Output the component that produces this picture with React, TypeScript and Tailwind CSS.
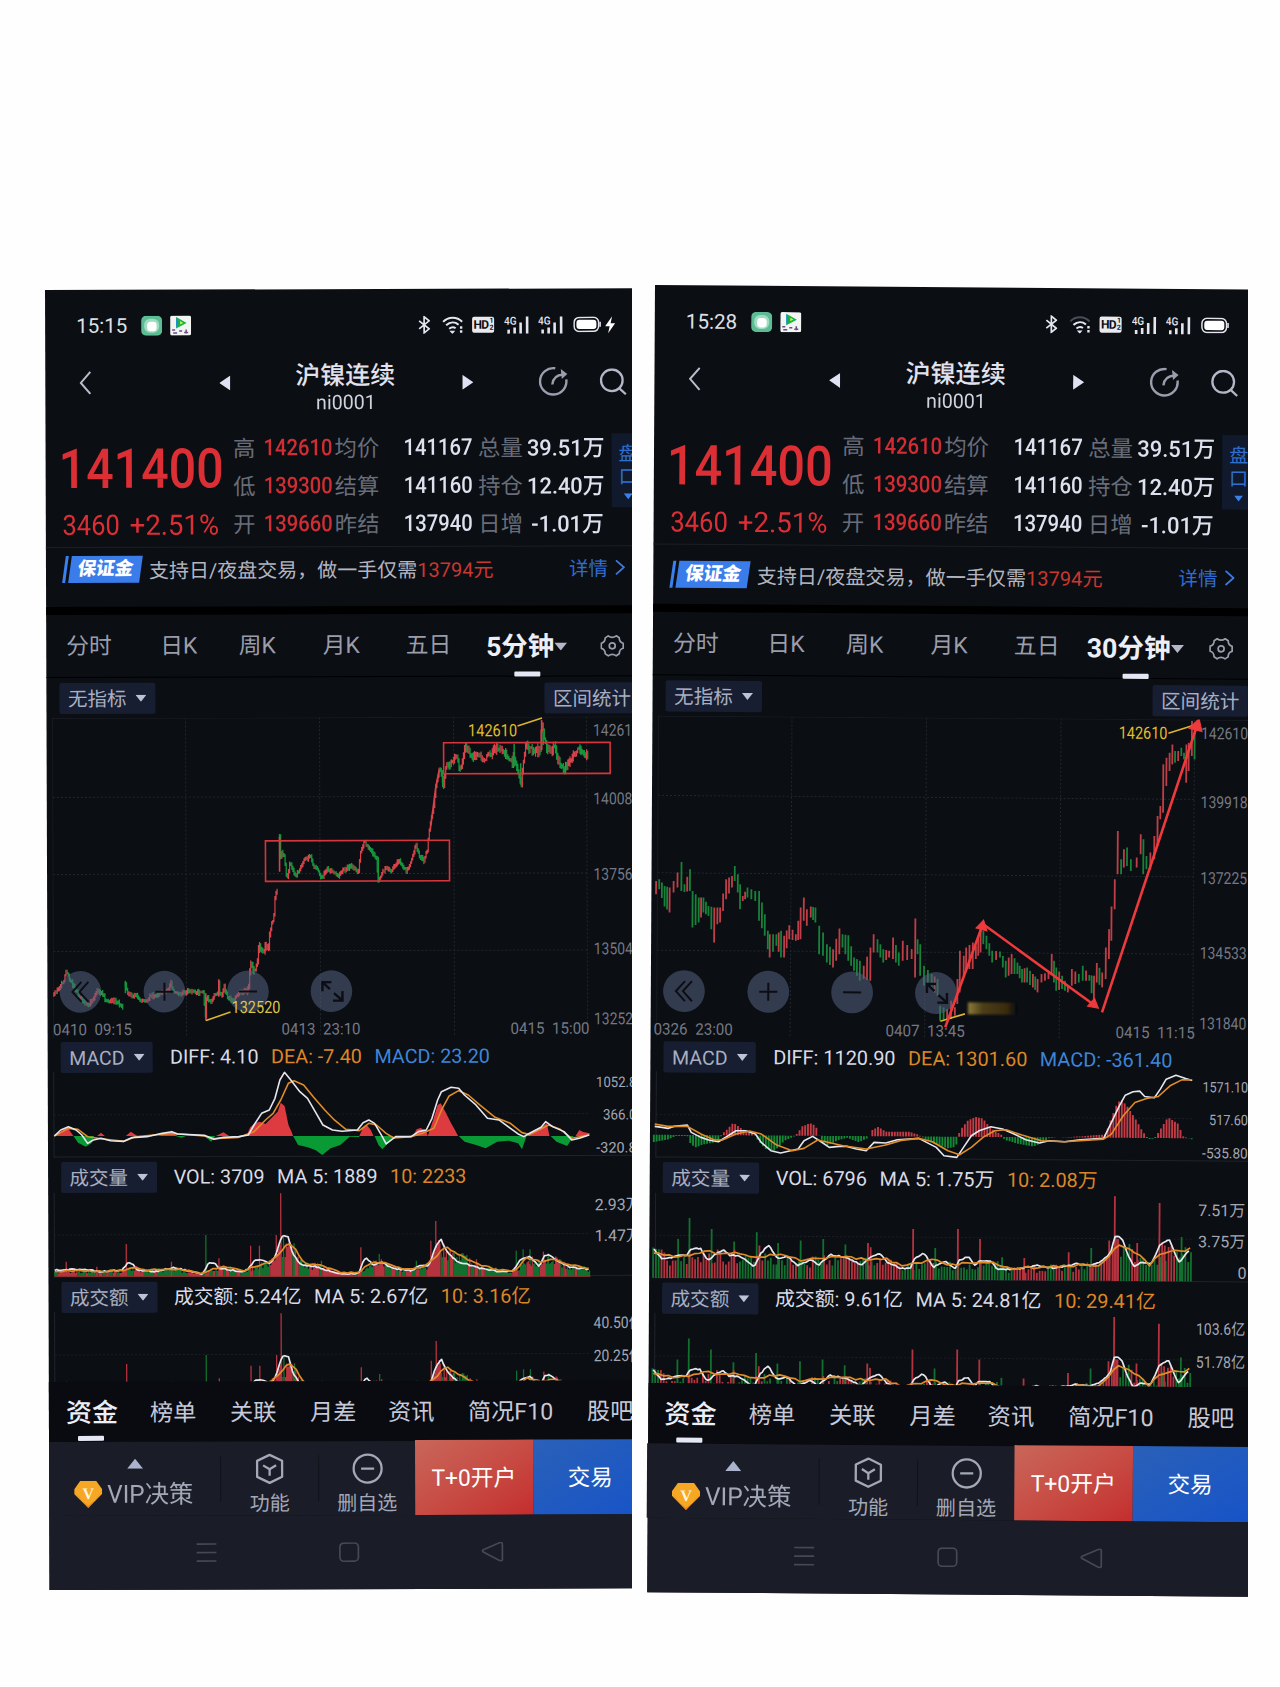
import type { ReactNode } from 'react';

type Pt = [number, number];
type Range = [number, number, number];
type Spike = [number, number, 'r' | 'g'];

const RED = '#d8434b';
const GREEN = '#12963c';
const UP = '#b5333f';
const DOWN = '#12702f';

const noise = (i: number) => {
  const v = Math.sin(i * 127.1 + 11.7) * 43758.5453;
  return v - Math.floor(v);
};

const at = (pts: Pt[], x: number) => {
  for (let i = 1; i < pts.length; i++) {
    if (x <= pts[i][0]) {
      const [x0, y0] = pts[i - 1];
      const [x1, y1] = pts[i];
      return y0 + ((y1 - y0) * (x - x0)) / (x1 - x0 || 1);
    }
  }
  return pts[pts.length - 1][1];
};

// resamples a moving average with a little jitter
const wobble = (pts: Pt[], step: number, amount: number) => {
  const out: Pt[] = [];
  for (let x = pts[0][0]; x <= pts[pts.length - 1][0]; x += step) {
    out.push([x, at(pts, x) + (noise(x + pts.length) - 0.5) * amount]);
  }
  return out;
};

const line = (pts: Pt[]) => 'M' + pts.map((p) => p.join(' ')).join('L');

const parse = (s: string): Pt[] => s.split(' ').map((p) => p.split(',').map(Number) as Pt);

// ---- 5 minute data ----

const price5 = [
  '35,525 50,500 60,488 67,455 75,475 90,505 110,545 125,555 140,535 148,512 160,518 172,545 185,540 200,545 217,560',
  '222,490 228,520 240,530 250,525 262,540 275,545 290,525 300,530 310,520 322,518 335,510 340,485 346,515 360,525 385,512 425,520 432,598 434,530 445,548 455,520 464,522 466,480 468,520 475,525 480,500 488,530 505,545 515,525 520,515 543,512 545,470 550,430 556,455 565,440 572,380 580,400 590,375 595,390 600,330 610,295 615,215 622,210',
  '626,52 627,155 630,90 638,110 645,180 652,130 668,170 690,120 708,110 715,140 725,145 735,175 750,148 765,155 780,165 795,150 812,138 832,155 838,90 848,66 858,80 870,100 878,115 884,183 895,155 905,140 915,155 938,120 958,155 970,125 982,75 990,105 1003,122 1012,90 1018,20 1022,0 1030,-50 1035,-100 1045,-155 1055,-105 1062,-160 1080,-180 1090,-185 1098,-150 1105,-185 1112,-220 1120,-205 1135,-190 1145,-200 1158,-180 1175,-195 1195,-215 1210,-205 1225,-190 1235,-175 1240,-190 1245,-160 1258,-110 1265,-180 1272,-230 1280,-210 1308,-210 1312,-300 1318,-250 1325,-215 1335,-210 1345,-220 1355,-180 1370,-150 1385,-180 1400,-200 1407,-220 1418,-210 1433,-190',
].map(parse);

const macdRed5 = [
  '38,288 55,275 72,262 88,288', '150,288 160,278 170,288', '225,288 238,275 255,288', '310,288 345,275 360,288',
  '460,288 480,277 495,288',
  '540,288 550,262 562,250 575,245 590,252 605,235 622,215 630,188 640,198 650,255 658,275 662,288',
  '835,288 845,262 855,255 865,270 872,288', '975,288 985,268 995,264 1010,272 1014,288',
  '1014,288 1028,240 1040,195 1048,190 1060,215 1075,250 1085,270 1093,288',
  '1272,288 1290,272 1315,258 1325,250 1332,288', '1400,288 1410,270 1420,276 1437,280 1437,288',
];
const macdGreen5 = [
  '88,288 100,308 120,320 135,310 142,288', '430,288 448,305 458,288',
  '662,288 675,315 700,322 720,330 738,345 760,325 785,315 810,290 835,291 835,288', '875,288 885,315 895,328 910,310 925,288',
  '1095,288 1110,305 1140,315 1165,325 1195,305 1225,302 1250,310 1260,328 1272,288', '1335,288 1350,305 1378,318 1395,288',
  '355,288 370,293 382,288',
];
const diff5 = parse('38,288 55,270 75,260 95,270 110,285 125,310 140,300 160,295 185,302 220,304 240,293 280,290 320,280 345,275 360,282 430,286 455,298 480,292 520,290 545,285 560,255 580,220 600,210 615,175 628,120 640,97 655,118 680,155 700,175 720,215 740,255 765,270 790,274 830,270 845,248 860,240 875,250 895,290 905,312 930,290 970,290 990,275 1010,270 1025,235 1040,180 1050,155 1075,142 1095,145 1110,165 1140,195 1170,235 1200,240 1230,265 1250,282 1265,290 1280,280 1310,262 1322,245 1340,260 1370,275 1390,300 1410,295 1435,285');
const dea5 = parse('38,288 75,265 100,268 125,290 160,296 220,304 250,290 345,280 430,288 455,296 520,292 560,275 590,240 610,220 630,180 650,130 665,122 690,135 715,170 745,210 770,240 800,268 835,272 860,250 880,255 905,280 925,294 970,290 1000,280 1030,265 1050,210 1070,168 1095,152 1120,165 1150,195 1190,232 1230,250 1260,278 1280,284 1330,255 1360,268 1390,295 1435,285');
const volA5 = parse('38,690 75,688 120,690 160,695 215,690 228,670 240,670 255,690 300,695 345,683 380,690 425,702 440,668 455,668 465,685 485,688 530,695 545,685 560,660 580,658 600,670 615,650 628,600 635,585 648,592 660,640 680,675 720,680 760,695 800,702 832,700 845,660 853,655 870,675 890,665 905,675 920,685 970,692 995,675 1015,680 1030,630 1040,605 1048,600 1065,640 1090,665 1150,685 1200,695 1235,692 1255,660 1280,650 1305,680 1318,645 1330,645 1355,665 1380,680 1435,688');
const volB5 = parse('38,694 100,692 160,694 215,692 250,682 270,690 345,686 425,700 455,685 475,680 530,692 560,680 600,665 625,640 648,608 665,625 690,672 730,675 790,698 832,698 860,670 900,665 950,690 1000,682 1030,655 1060,618 1080,635 1110,655 1150,675 1200,690 1240,692 1270,655 1310,665 1340,655 1370,672 1435,686');
const spikes5: Spike[] = [
  [68, 665, 'r'], [148, 680, 'r'], [225, 612, 'r'], [343, 665, 'r'], [433, 585, 'g'], [467, 655, 'r'], [550, 617, 'r'],
  [573, 617, 'r'], [617, 585, 'r'], [629, 460, 'r'], [636, 590, 'g'], [665, 650, 'g'], [735, 662, 'g'], [838, 622, 'r'],
  [886, 642, 'g'], [983, 662, 'g'], [1021, 602, 'r'], [1034, 543, 'r'], [1042, 600, 'r'], [1115, 645, 'g'],
  [1140, 658, 'r'], [1244, 632, 'g'], [1262, 628, 'g'], [1280, 628, 'g'], [1315, 635, 'r'], [1328, 640, 'g'],
];

// ---- 30 minute data ----

const price30: Range[] = '30,185,225 38,180,210 52,200,262 65,205,280 75,185,220 85,160,205 95,128,215 103,195,218 117,150,215 124,215,325 140,235,310 152,235,280 165,260,290 180,265,370 188,265,315 195,265,310 210,180,240 225,170,205 232,140,185 240,165,220 246,195,270 253,230,245 265,205,235 285,215,245 295,215,305 310,285,350 318,335,390 323,345,415 340,345,380 352,335,415 360,350,415 373,318,360 390,345,365 402,265,360 410,235,305 418,270,320 428,262,295 440,265,310 450,320,405 460,340,410 470,375,430 486,390,445 502,328,405 510,345,385 525,348,425 540,415,455 555,425,485 565,440,480 582,385,485 590,345,400 600,360,400 615,390,430 630,395,415 640,355,420 655,400,440 665,365,425 688,390,420 697,298,475 703,360,405 710,375,470 720,440,500 740,465,510 755,480,530 762,560,605 780,570,600 790,545,600 800,565,590 812,395,520 822,410,470 828,385,450 845,370,450 853,380,420 865,330,400 872,335,375 880,350,390 895,395,430 915,397,415 930,425,475 945,405,465 960,430,465 972,450,490 985,445,490 1000,465,505 1012,480,520 1022,465,490 1040,460,480 1048,405,465 1060,445,515 1075,470,510 1090,500,520 1100,450,500 1118,465,490 1128,440,485 1145,468,485 1157,470,560 1164,432,490 1178,460,505 1187,385,480 1195,330,420 1201,262,365 1209,180,270 1216,35,165 1225,120,165 1232,90,145 1240,85,140 1250,120,155 1265,115,145 1275,45,105 1282,60,165 1290,110,150 1300,100,150 1310,50,120 1318,-10,80 1325,-40,0 1332,-165,-20 1340,-185,-100 1348,-200,-145 1355,-225,-165 1362,-205,-170 1370,-205,-175 1378,-215,-190 1385,-200,-180 1391,-225,-110 1397,-230,-145 1405,-295,-190 1412,-290,-180'
  .split(' ')
  .map((p) => p.split(',').map(Number) as Range);
const hist30 = parse('24,-22 60,-14 80,-3 110,-3 118,-25 130,-38 150,-28 190,-20 200,5 210,15 228,38 240,28 260,12 280,5 285,-5 310,-40 335,-45 360,-15 385,-2 395,10 405,28 425,38 440,30 450,-5 470,-28 500,-12 520,-5 550,-18 578,-4 580,15 600,28 620,14 680,14 705,5 715,-3 740,-20 780,-35 800,-30 806,-5 810,18 830,48 850,60 870,55 890,25 920,5 925,-8 960,-20 1000,-28 1030,-12 1040,-2 1115,3 1185,10 1200,60 1215,105 1225,115 1240,95 1260,60 1280,20 1295,-3 1310,-2 1320,15 1345,62 1370,45 1385,5 1405,-3');
const diff30 = parse('26,262 45,265 60,268 75,262 110,258 120,280 145,295 165,303 190,308 215,290 235,275 260,275 285,285 300,310 325,335 350,342 395,330 410,305 432,292 450,305 475,325 500,322 520,322 545,330 570,335 590,310 620,312 650,302 680,300 705,298 725,310 750,325 770,350 803,355 820,325 840,290 860,275 890,263 920,270 950,285 980,302 1015,312 1040,305 1080,308 1120,302 1180,298 1200,250 1220,200 1235,168 1255,158 1272,156 1285,172 1310,176 1325,150 1340,120 1365,108 1390,118 1407,124');
const dea30 = parse('26,255 60,262 110,262 145,285 180,303 200,303 235,285 270,276 300,285 340,318 380,335 410,328 445,303 480,312 510,320 570,330 620,318 660,304 705,298 740,308 780,335 810,347 840,325 870,295 900,275 930,272 970,288 1020,305 1080,308 1180,300 1200,285 1230,230 1260,190 1290,178 1320,172 1350,140 1380,122 1405,122');
const volA30 = parse('26,630 45,658 75,655 95,648 110,652 120,632 145,628 165,665 180,650 205,632 220,650 245,650 265,665 283,685 300,645 320,618 345,660 370,652 395,680 430,662 450,678 480,648 520,655 560,678 580,655 605,643 625,670 660,688 685,690 695,660 720,643 745,685 775,665 800,690 810,665 835,652 850,680 865,665 890,665 910,692 960,690 1010,680 1060,688 1110,675 1150,680 1180,665 1200,640 1212,588 1230,600 1245,650 1260,685 1280,670 1305,675 1325,620 1350,600 1375,672 1390,650 1405,628');
const volB30 = parse('26,640 80,655 120,648 170,638 200,645 240,640 285,655 330,648 370,650 410,665 460,660 500,655 560,660 620,660 660,680 700,675 740,665 800,678 850,670 900,672 940,688 1000,685 1100,680 1170,678 1195,650 1220,622 1245,628 1270,648 1300,678 1330,640 1360,635 1390,637 1405,630');
const spikes30: Spike[] = [
  [88, 600, 'g'], [117, 537, 'g'], [174, 570, 'g'], [232, 608, 'g'], [290, 580, 'g'], [297, 620, 'r'], [345, 612, 'g'],
  [403, 605, 'g'], [461, 600, 'g'], [518, 617, 'g'], [576, 612, 'r'], [583, 625, 'r'], [692, 570, 'r'], [749, 627, 'g'],
  [807, 570, 'r'], [864, 600, 'r'], [921, 655, 'g'], [978, 657, 'r'], [1092, 640, 'r'], [1150, 627, 'g'], [1196, 605, 'r'],
  [1210, 472, 'r'], [1217, 600, 'r'], [1268, 612, 'r'], [1325, 492, 'r'], [1332, 610, 'r'], [1339, 620, 'r'], [1382, 594, 'g'],
];

const quotes5 = {
  time: '15:15',
  charging: true,
  period: '5分钟',
  bannerPad: 'pt-[7px]',
  axis: ['14261', '14008', '13756', '13504', '13252'],
  dates: ['0410 09:15', '0413 23:10', '0415 15:00'],
  macd: ['DIFF: 4.10', 'DEA: -7.40', 'MACD: 23.20'],
  vol: ['VOL: 3709', 'MA 5: 1889', '10: 2233'],
  amount: ['成交额: 5.24亿', 'MA 5: 2.67亿', '10: 3.16亿'],
  macdAxis: ['1052.8', '366.0', '-320.8'],
  volAxis: ['2.93万', '1.47万'],
  amountAxis: ['40.50亿', '20.25亿'],
};
const quotes30: typeof quotes5 = {
  time: '15:28',
  charging: false,
  period: '30分钟',
  bannerPad: 'pt-[15px]',
  axis: ['142610', '139918', '137225', '134533', '131840'],
  dates: ['0326 23:00', '0407 13:45', '0415 11:15'],
  macd: ['DIFF: 1120.90', 'DEA: 1301.60', 'MACD: -361.40'],
  vol: ['VOL: 6796', 'MA 5: 1.75万', '10: 2.08万'],
  amount: ['成交额: 9.61亿', 'MA 5: 24.81亿', '10: 29.41亿'],
  macdAxis: ['1571.10', '517.60', '-535.80'],
  volAxis: ['7.51万', '3.75万', '0'],
  amountAxis: ['103.6亿', '51.78亿'],
};

const stats = [
  ['高', '142610', '均价', '141167', '总量', '39.51万'],
  ['低', '139300', '结算', '141160', '持仓', '12.40万'],
  ['开', '139660', '昨结', '137940', '日增', '-1.01万'],
];

function Stroke({ pts, color, width = 1.6 }: { pts: Pt[]; color: string; width?: number }) {
  return <path d={line(pts)} fill="none" stroke={color} strokeWidth={width} strokeLinejoin="round" vectorEffect="non-scaling-stroke" />;
}

function Bars({ d, color, width }: { d: string; color: string; width: number }) {
  return <path d={d} fill="none" stroke={color} strokeWidth={width} vectorEffect="non-scaling-stroke" />;
}

function Candles5() {
  let up = '';
  let down = '';
  price5.forEach((run) => {
    let prev = run[0][1];
    for (let x = run[0][0]; x <= run[run.length - 1][0]; x += 2.9) {
      const busy = x > 1050 || (x > 540 && x < 600);
      const y = at(run, x) + (noise(x) - 0.5) * (busy ? 16 : 9);
      const pad = 3 + noise(x + 3) * (busy ? 12 : 5);
      const seg = `M${x} ${Math.min(prev, y) - pad}V${Math.max(prev, y) + pad}`;
      if (y - prev < (noise(x + 9) - 0.5) * 10) up += seg;
      else down += seg;
      prev = y;
    }
  });
  return (
    <>
      <Bars d={down} color={GREEN} width={1.3} />
      <Bars d={up} color={RED} width={1.2} />
      <path d="M432 520V602M626 50V155M1312 -300V-210M1020 30L1035 -100L1044 -150M466 478V530" fill="none" stroke={RED} strokeWidth={1.6} vectorEffect="non-scaling-stroke" />
      <path d="M1240 -228V-160M1257 -170V-106M884 110V188M222 486V520M1053 -150V-98M1316 -265V-225" fill="none" stroke={GREEN} strokeWidth={1.5} vectorEffect="non-scaling-stroke" />
    </>
  );
}

function Candles30() {
  let up = '';
  let down = '';
  const tops = price30.map(([x, t]) => [x, t] as Pt);
  const bottoms = price30.map(([x, , b]) => [x, b] as Pt);
  const xs = price30.map((p) => p[0]);
  price30.forEach(([x], i) => {
    const next = xs[i + 1];
    if (next && next - x > 11 && x < 1200) xs.push((x + next) / 2);
  });
  xs.sort((a, b) => a - b).forEach((x) => {
    const t = at(tops, x);
    const b = at(bottoms, x);
    const slope = at(tops, x + 6) + at(bottoms, x + 6) - at(tops, x - 6) - at(bottoms, x - 6);
    const tall = [65, 180, 323, 697, 1048, 1157].includes(x);
    if (tall || slope < (noise(x) - 0.5) * 70) up += `M${x} ${t}V${b}`;
    else down += `M${x} ${t}V${b}`;
  });
  return (
    <>
      <Bars d={up} color="#bf3f48" width={1.8} />
      <Bars d={down} color="#178239" width={1.8} />
    </>
  );
}

function Volume({ wide }: { wide: boolean }) {
  const [ma5, ma10, spikes] = wide ? [volA30, volB30, spikes30] : [volA5, volB5, spikes5];
  const step = wide ? 7.2 : 3.4;
  const base = (x: number) => (wide ? 717 + x * 0.0075 : 709);
  let up = '';
  let down = '';
  for (let x = wide ? 24 : 38; x < (wide ? 1407 : 1438); x += step) {
    const h = base(x) - at(ma10, x);
    const y = base(x) - h * (0.55 + noise(x) * 0.65);
    const surge = wide ? x > 1175 && x < 1220 : (x > 600 && x < 632) || (x > 1015 && x < 1045);
    const seg = `M${x} ${base(x)}V${surge ? Math.min(y, at(ma5, x) + 8) : y}`;
    if (surge || noise(Math.floor(x / (wide ? 22 : 9)) + 5) > 0.5) up += seg;
    else down += seg;
  }
  spikes.forEach(([x, y, c]) => {
    if (c === 'r') up += `M${x} ${base(x)}V${y}`;
    else down += `M${x} ${base(x)}V${y}`;
  });
  return (
    <>
      <Bars d={down} color={DOWN} width={wide ? 1.8 : 1.3} />
      <Bars d={up} color={UP} width={wide ? 1.8 : 1.3} />
      {!wide && <path d="M38 709.500H1438" stroke="#a83a35" strokeWidth="2" />}
      <Stroke pts={wobble(ma5, 5, 4)} color="#e6e6ee" width={1.7} />
      <Stroke pts={wobble(ma10, wide ? 13 : 9, wide ? 9 : 5)} color="#e08c28" width={1.7} />
    </>
  );
}

function Macd({ wide }: { wide: boolean }) {
  if (!wide) {
    return (
      <>
        {macdRed5.map((p) => <polygon key={p} points={p} fill="#de3b41" />)}
        {macdGreen5.map((p) => <polygon key={p} points={p} fill="#0a9a35" />)}
        <Stroke pts={dea5} color="#e08c28" />
        <Stroke pts={diff5} color="#e6e6ee" />
      </>
    );
  }
  let up = '';
  let down = '';
  for (let x = 24; x < 1408; x += 7.2) {
    const zero = 287 + x * 0.0075;
    const h = at(hist30, x);
    if (h > 0) up += `M${x} ${zero}V${zero - h}`;
    else down += `M${x} ${zero}V${zero - h}`;
  }
  return (
    <>
      <Bars d={up} color="#c43b45" width={1.9} />
      <Bars d={down} color="#128a35" width={1.9} />
      <Stroke pts={diff30} color="#e6e6ee" />
      <Stroke pts={dea30} color="#e08c28" />
    </>
  );
}

function Label({ x, y, w, size = 16, fill = '#757984', end, gap, children }: { x: number; y: number; w?: number; size?: number; fill?: string; end?: boolean; gap?: number; children: string }) {
  return (
    <text x={x} y={y + size * 0.36} fontSize={size} fill={fill} textLength={w} lengthAdjust="spacingAndGlyphs" textAnchor={end ? 'end' : 'start'} wordSpacing={gap}>
      {children}
    </text>
  );
}

function PriceChart({ wide, q }: { wide: boolean; q: typeof quotes5 }) {
  return (
    <svg className="block h-[320px] w-[620px] shrink-0" viewBox="0 428 620 320">
      <g stroke="#23272e" strokeWidth="1" strokeDasharray="2 2">
        {[139, 273, 407, 540].map((x) => <path key={x} d={`M${x} 428V747`} />)}
        {[507.5, 584.5, 661.5].map((y) => <path key={y} d={`M6 ${y}H540`} />)}
      </g>
      <path d="M6 428V748M6 428.500H620" stroke="#171a20" fill="none" />
      {q.axis.map((t, i) => (
        <Label key={t} x={546.500} y={[441.5, 510, 585.5, 660, 730][i]} w={t.length * 7.8} size={16.500}>{t}</Label>
      ))}
      {q.dates.map((t, i) => <Label key={t} x={[wide ? 3 : 5.500, 234, 463][i]} y={739.5} w={79} gap={4}>{t}</Label>)}
      <g transform={wide ? 'matrix(.3875 -.003 0 .331 -7 531.5)' : 'matrix(.3827 .0011 0 .3333 -7 530)'}>
        {wide ? <Candles30 /> : <Candles5 />}
      </g>
      <g>
        {[33, 117, 200.5, 284].map((x) => <circle key={x} cx={x} cy="702" r="20.800" fill="#566080" fillOpacity="0.550" />)}
        <g stroke="#0c0e14" strokeWidth="2" fill="none">
          <path d="M34 692L25 702L34 712M41 692L32 702L41 712M108 702H126M117 693V711M191.500 702H209.500" />
          <path d="M275 702V693H284M275.500 693.500L282.500 700M285.500 711.500H295V702M286.500 704L294.500 711" strokeWidth="2.400" />
        </g>
      </g>
      {wide ? (
        <>
          <path d="M514 442L540 433.500M288.500 730L313 722.500" stroke="#dcb52e" strokeWidth="1.600" />
          <Label x={464.500} y={441.500} w={48.500} size={17} fill="#e2bd2c">142610</Label>
          <defs>
            <linearGradient id="smear">
              <stop offset="0" stopColor="#8f7d38" />
              <stop offset="0.300" stopColor="#4d3f1a" />
              <stop offset="0.800" stopColor="#3a2b0e" />
              <stop offset="1" stopColor="#0c0e13" />
            </linearGradient>
            <filter id="soft"><feGaussianBlur stdDeviation="0.900" /></filter>
          </defs>
          <rect x="316" y="711" width="48" height="12" fill="url(#smear)" filter="url(#soft)" />
          <g stroke="#ee3a3c" strokeWidth="2.600" fill="#ee3a3c">
            <path d="M293.500 736L330 634M330.500 633L442 713M449.500 720L541.500 437" fill="none" />
            <path strokeWidth="1" d="M331 629L323.500 637L334.500 640ZM446 716L435 714L442 706ZM544.500 427L534.500 437L547.500 440Z" />
          </g>
        </>
      ) : (
        <>
          <path d="M471 437.500L495.500 429.500M158.500 731L183 722.500" stroke="#dcb52e" strokeWidth="1.600" />
          <Label x={421.500} y={441.500} w={49} size={17} fill="#e2bd2c">142610</Label>
          <Label x={184} y={717.500} w={49} size={17} fill="#dcc44a">132520</Label>
          <g fill="none" stroke="#d6363b" strokeWidth="1.600">
            <rect x="397" y="454" width="166.500" height="31" />
            <rect x="218.500" y="551.500" width="184" height="40.500" />
          </g>
        </>
      )}
    </svg>
  );
}

const dataMatrix = (wide: boolean, dy: number) =>
  wide ? `matrix(.3875 -.0029 0 .331 -5.4 ${750.1 + dy})` : `matrix(.3827 .0011 0 .3333 -8.2 ${750 + dy})`;

function Tag({ children, caret = true }: { children: string; caret?: boolean }) {
  return (
    <div className="flex h-[31px] items-center gap-[9px] rounded-[2px] bg-[#171e32] px-[8.500px] text-[19.5px] whitespace-nowrap text-[#a9afc0]">
      <span className="pt-[3px]">{children}</span>
      {caret && <svg className="h-[7px] w-[11px]" viewBox="0 0 11 7"><path d="M0 0H11L5.500 7Z" fill="#bcc3d6" /></svg>}
    </div>
  );
}

function Legend({ name, values, last }: { name: string; values: string[]; last?: string }) {
  const colors = last ? ['text-[#d9dbe6]', 'text-[#dc8626]', last] : ['text-[#d9dbe6]', 'text-[#d9dbe6]', 'text-[#dc8626]'];
  return (
    <div className="flex h-[38px] items-center pl-[13px]">
      <Tag>{name}</Tag>
      <div className="ml-[17px] flex gap-[12.500px] pt-[2px] text-[19.800px] whitespace-nowrap">
        {values.map((v, i) => <span key={v} className={colors[i]}>{v}</span>)}
      </div>
    </div>
  );
}

function Signal() {
  return (
    <svg className="h-[19px] w-[25px]" viewBox="0 0 25 19">
      <text x="0" y="9" fontSize="11" fontWeight="500" fill="#e4e5ee" textLength="12.500" lengthAdjust="spacingAndGlyphs">4G</text>
      <path d="M4.500 14V18M10.500 12V18M16.500 7V18M23 1V18" stroke="#e4e5ee" strokeWidth="2.600" />
    </svg>
  );
}

function StatusBar({ time, charging }: { time: string; charging: boolean }) {
  return (
    <div className="flex h-[72px] items-center pl-[31px]">
      <span className="w-[65px] pt-px text-[20.5px] text-[#dfe0e6]">{time}</span>
      <svg className="h-[20px] w-[21px]" viewBox="0 0 21 20">
        <rect width="21" height="20" rx="5" fill="#5cbd95" />
        <rect x="3" y="3" width="15" height="14" rx="6" fill="#9fdcc2" />
        <rect x="6" y="6" width="9.500" height="9.500" rx="3.500" fill="#fff" />
      </svg>
      <svg className="ml-[8px] h-[20px] w-[21px]" viewBox="0 0 21 20">
        <rect width="21" height="20" rx="2" fill="#f3f5f2" />
        <path d="M6 1.500L16.500 7.500L6 13Z" fill="#19b24b" />
        <path d="M6 1.500L8 7L6 13Z" fill="#1d8ad8" />
        <path d="M10 5.500L13 7.300L10 9Z" fill="#d7ee3c" />
        <path d="M2 14.500H5M3 17.500H7M9 15.500H12M14 17H18M16 14V18" stroke="#6c4b87" strokeWidth="1.500" />
      </svg>
      <div className={`ml-auto flex items-center ${charging ? 'mr-[50px]' : 'mr-[48px]'}`}>
        <svg className="h-[18px] w-[12px]" viewBox="0 0 12 18" fill="none" stroke="#e4e5ee" strokeWidth="1.700">
          <path d="M1 5L11 13L6 17V1L11 5L1 13" />
        </svg>
        <svg className="ml-[12px] h-[18px] w-[22px]" viewBox="0 0 22 18" fill="none" stroke="#e4e5ee" strokeWidth="2">
          <path d="M1 6C6 .5 15 .5 20 6" stroke={charging ? '#e4e5ee' : '#4a4d55'} />
          <path d="M4 9.500C8 6 13 6 16.500 9M7 13C9.500 11 11.500 11 13.500 12.500" />
          <path d="M8.500 15.500L10.300 17.500L12 15.500Z" fill="#e4e5ee" strokeWidth="1" />
          <path d="M19 10.500V13M19 14.500V17" strokeWidth="2.400" />
        </svg>
        <div className="ml-[8px] flex h-[16px] w-[22px] items-center justify-center rounded-[2px] bg-[#e9e9ee] font-['Roboto'] text-[12px] font-bold tracking-[-0.7px] text-[#0b0e13]">
          HD<span className="ml-px text-[7px] leading-[7px]">1<br />2</span>
        </div>
        <span className="ml-[10px]"><Signal /></span>
        <span className="ml-[9px]"><Signal /></span>
        <svg className="ml-[10px] h-[16px] w-[28px]" viewBox="0 0 28 16">
          <rect x="1" y="1" width="24.500" height="14" rx="5" fill="none" stroke="#e4e5ee" strokeWidth="1.500" />
          <rect x="3.300" y="3.300" width="20" height="9.400" rx="3" fill="#fff" />
          <path d="M27 5.500V10.500" stroke="#e4e5ee" strokeWidth="1.500" />
        </svg>
        {charging && <svg className="ml-[4px] h-[17px] w-[10px]" viewBox="0 0 10 17"><path d="M7 0L0 10H4.500L3 17L10 7H5.500Z" fill="#fff" /></svg>}
      </div>
    </div>
  );
}

function TitleBar() {
  const cell = 'flex h-[42px] items-center';
  return (
    <div className="flex h-[58px]">
      <div className={`${cell} w-[173.500px] pl-[34px]`}>
        <svg className="h-[24px] w-[12px]" viewBox="0 0 12 24"><path d="M11 1L1.500 12L11 23" fill="none" stroke="#b9bccb" strokeWidth="2" /></svg>
      </div>
      <div className={`${cell} w-[76px]`}>
        <svg className="h-[15px] w-[11px]" viewBox="0 0 11 15"><path d="M11 0V15L0 7.500Z" fill="#e0e1f2" /></svg>
      </div>
      <div className="w-[101px] text-center">
        <div className="pt-px text-[25px] leading-[27px] font-medium whitespace-nowrap text-[#e1e2ee]">沪镍连续</div>
        <div className="scale-x-98 text-[20px] leading-[26px] text-[#d0d2de]">ni0001</div>
      </div>
      <div className={`${cell} ml-[66px] w-[76px]`}>
        <svg className="h-[15px] w-[11px]" viewBox="0 0 11 15"><path d="M0 0V15L11 7.500Z" fill="#e0e1f2" /></svg>
      </div>
      <div className={`${cell} w-[61px]`}>
        <svg className="h-[30px] w-[30px]" viewBox="0 0 30 30" fill="none" stroke="#9a9eac" strokeWidth="2.400">
          <path d="M17 1.800A13.200 13.200 0 1 0 28 13M14 18C14.500 12 18 8.500 25 8" />
          <path d="M22.500 2.500L29 7.500L23.500 12.500Z" fill="#9a9eac" stroke="none" />
        </svg>
      </div>
      <div className={cell}>
        <svg className="h-[27px] w-[28px]" viewBox="0 0 28 27" fill="none" stroke="#b4b7c6" strokeWidth="2.300">
          <circle cx="12.500" cy="12" r="10.800" /><path d="M20 20L26.500 26" />
        </svg>
      </div>
    </div>
  );
}

function Num({ w, className, children }: { w: string; className: string; children: ReactNode }) {
  return <div className={`${w} shrink-0 whitespace-nowrap`}><span className={`inline-block origin-left ${className}`}>{children}</span></div>;
}

function Quote() {
  return (
    <div className="flex h-[128px] border-b border-[#1c2026] pt-[10.500px] pl-[13px]">
      <div className="w-[174.500px] shrink-0 text-[#dc2f35]">
        <div className="h-[76px]">
          <span className="inline-block origin-left scale-x-88 text-[55px] leading-[76px] font-medium">141400</span>
        </div>
        <div className="flex h-[38px] items-center text-[28px]">
          <Num w="w-[70.500px]" className="scale-x-91 pl-[4px]">3460</Num>
          <Num w="w-[90px]" className="scale-x-98">+2.51%</Num>
        </div>
      </div>
      <div className="shrink-0">
        {stats.map(([a, av, b, bv, c, cv]) => (
          <div key={a} className="flex h-[38px] items-center text-[22.300px] text-[#686d79]">
            <span className="w-[30.500px]">{a}</span>
            <Num w="w-[71px]" className="scale-x-88 text-[23px] font-medium text-[#d12d33]">{av}</Num>
            <span className="w-[68.500px]">{b}</span>
            <Num w="w-[75px]" className="scale-x-88 text-[23px] font-medium text-[#dfe1ee]">{bv}</Num>
            <span className="w-[46px]">{c}</span>
            <span className="inline-block w-[79px] origin-right scale-x-97 text-right text-[22.500px] font-medium whitespace-nowrap text-[#dfe1ee]">{cv}</span>
          </div>
        ))}
      </div>
      <div className="mt-[4px] ml-[8.500px] flex h-[74px] w-[60px] shrink-0 flex-col items-start gap-[3px] bg-[#111a2c] pt-[11px] pl-[7px] text-[19px] leading-[20px] text-[#2f6fd0]">
        <span>盘</span>
        <span>口</span>
        <svg className="mt-[3px] ml-[5px] h-[6px] w-[9px]" viewBox="0 0 9 6"><path d="M0 0H9L4.500 6Z" fill="#3b82e8" /></svg>
      </div>
    </div>
  );
}

function Banner({ pad }: { pad: string }) {
  return (
    <div className={`flex h-[59px] items-start pl-[18px] ${pad}`}>
      <div className="flex h-[28px] items-center gap-[3px]">
        <div className="h-[27px] w-[3px] -skew-x-8 bg-[#3a80ee]" />
        <div className="flex h-[27px] w-[71px] -skew-x-8 items-center justify-center bg-[#3a7cea] text-[18.500px] font-black whitespace-nowrap text-white">
          <span className="pt-px">保证金</span>
        </div>
      </div>
      <div className="ml-[8px] w-[420px] text-[20px] leading-[32px] whitespace-nowrap text-[#b3b6c1]">
        支持日/夜盘交易，做一手仅需<span className="text-[#c9372f]">13794元</span>
      </div>
      <div className="flex h-[28px] items-center gap-[7px] text-[19.500px] whitespace-nowrap text-[#2f6bd0]">
        <span className="pt-[4px]">详情</span>
        <svg className="h-[16px] w-[10px]" viewBox="0 0 10 16"><path d="M1 1L9 8L1 15" fill="none" stroke="#3a7ade" strokeWidth="1.800" /></svg>
      </div>
    </div>
  );
}

function PeriodTabs({ period }: { period: string }) {
  return (
    <div className="flex h-[63px] items-center border-b border-black pt-[3px] pl-[20px] text-[22.800px] whitespace-nowrap text-[#9a9eac]">
      <span className="w-[94px]">分时</span>
      <span className="w-[78.500px]">日K</span>
      <span className="w-[84px]">周K</span>
      <span className="w-[83px]">月K</span>
      <span className="w-[65px]">五日</span>
      <div className="relative flex h-[60px] w-[112px] items-center justify-center text-[26.500px] font-bold text-[#eceef8]">
        {period}
        <svg className="h-[8px] w-[13px] shrink-0" viewBox="0 0 13 8"><path d="M0 0H13L6.500 8Z" fill="#b4b8c6" /></svg>
        <div className="absolute bottom-0 left-1/2 h-[4.500px] w-[26px] -translate-x-1/2 rounded-[1px] bg-[#e6e7f4]" />
      </div>
      <svg className="ml-[17px] h-[23px] w-[24px]" viewBox="0 0 24 23" fill="none" stroke="#9a9eac" strokeWidth="1.700" strokeLinejoin="round">
        <path d="M8 1.500Q12 4.500 16 1.500L19 3.500Q19 8 23 9V14Q19 15 19 19.500L16 21.500Q12 18.500 8 21.500L5 19.500Q5 15 1 14V9Q5 8 5 3.500Z" />
        <circle cx="12" cy="11.500" r="3" />
      </svg>
    </div>
  );
}

function BottomTabs({ wide }: { wide: boolean }) {
  return (
    <div className={`flex h-[59.500px] items-center bg-[#0a0b10] pt-[4px] text-[23.200px] whitespace-nowrap text-[#c6c9d8] ${wide ? 'pl-[16px]' : 'pl-[17px]'}`}>
      <div className="relative flex h-[55px] w-[84px] items-center text-[26px] font-medium text-[#eceef8]">
        资金
        <div className="absolute bottom-0 left-[12px] h-[5px] w-[26px] rounded-[1px] bg-[#e6e7f4]" />
      </div>
      <span className="w-[80px]">榜单</span>
      <span className="w-[80px]">关联</span>
      <span className="w-[78px]">月差</span>
      <span className="w-[80px]">资讯</span>
      <span className="w-[119px]">简况F10</span>
      <span>股吧</span>
    </div>
  );
}

function ActionBar({ wide }: { wide: boolean }) {
  return (
    <div className={`flex h-[74.500px] bg-[#1a1d27] text-[#a3a8b8] ${wide ? '-ml-px' : ''}`}>
      <div className="flex w-[171px] flex-col pt-[17px]">
        <svg className="ml-[78px] h-[10px] w-[16px]" viewBox="0 0 16 10"><path d="M8 0L16 10H0Z" fill="#aab2cc" /></svg>
        <div className="mt-[9px] ml-[25px] flex items-center gap-[5px] text-[24.800px] leading-[32px] whitespace-nowrap">
          <svg className="h-[27px] w-[28px] shrink-0" viewBox="0 0 28 27">
            <path d="M6 0H22L28 8.500V13L14 27L0 13V8.500Z" fill="#f6a723" />
            <path d="M0 10L14 27L28 10L22 18L14 25L6 18Z" fill="#ee7f16" />
            <text x="14" y="18" fontSize="16" fontWeight="700" fill="#fff4dc" textAnchor="middle" fontFamily="Liberation Serif">V</text>
          </svg>
          <span className="inline-block origin-left scale-x-98 pt-px">VIP决策</span>
        </div>
      </div>
      <div className="my-[14px] w-px bg-[#11131a]" />
      <div className="flex w-[97px] flex-col items-center pt-[12px] text-[20px] leading-[39px]">
        <svg className="h-[31px] w-[29px] shrink-0" viewBox="0 0 29 31" fill="none" stroke="#a3a8b8" strokeWidth="2.300" strokeLinejoin="round">
          <path d="M14.500 1.500L27 7.500V23.500L14.500 29.500L2 23.500V7.500ZM8 12L14.500 16L21 12M14.500 16V22.500" />
        </svg>
        功能
      </div>
      <div className="my-[14px] w-px bg-[#11131a]" />
      <div className={`flex flex-col items-center pt-[12px] text-[20px] leading-[39px] ${wide ? 'w-[96px]' : 'w-[96px]'}`}>
        <svg className="h-[31px] w-[31px] shrink-0" viewBox="0 0 31 31" fill="none" stroke="#a3a8b8" strokeWidth="2.300">
          <circle cx="15.500" cy="15.500" r="14" /><path d="M9 15.500H22" />
        </svg>
        删自选
      </div>
      <div className="-mt-px flex w-[117.500px] items-center justify-center bg-linear-to-br from-[#c9665a] to-[#c42c2e] text-[22.800px] whitespace-nowrap text-white">
        <span className="pt-[4px]">T+0开户</span>
      </div>
      <div className="-mt-px flex w-[117px] items-center justify-center bg-linear-to-br from-[#2a60b8] to-[#1653c8] text-[22.500px] text-white">
        <span className="pt-[4px] pr-[2px]">交易</span>
      </div>
      <div className="grow" />
    </div>
  );
}

function SystemNav({ wide }: { wide: boolean }) {
  return (
    <div className={`flex h-[73.500px] items-center bg-[#1a1d27] ${wide ? 'pl-[145.500px]' : 'pl-[146.500px]'}`}>
      <svg className="h-[20px] w-[316px]" viewBox="0 0 316 20" fill="none" stroke="#454954" strokeWidth="1.700">
        <path d="M0 1.500H20M0 10H20M0 18.500H20" />
        <rect x="143.500" y="0.900" width="18.500" height="18.200" rx="4" />
        <path d="M286.500 10Q285.500 9 287 8L303.500 0.900Q306 0.500 306 2.500V17.500Q306 19.500 303.500 19Z" />
      </svg>
    </div>
  );
}

function Phone({ wide = false, q }: { wide?: boolean; q: typeof quotes5 }) {
  return (
    <div
      className={`flex w-[620px] origin-top-left flex-col bg-[#0b0e13] ${
        wide ? 'scale-x-[1.004] scale-y-[1.0055] skew-x-[-0.34deg] skew-y-[0.435deg]' : 'skew-x-[0.2deg] skew-y-[-0.17deg]'
      }`}
    >
      <StatusBar time={q.time} charging={q.charging} />
      <TitleBar />
      <Quote />
      <Banner pad={q.bannerPad} />
      <div className="h-[8px] bg-black" />
      <PeriodTabs period={q.period} />
      <div className="flex h-[40px] items-center pl-[13px]">
        <div className="w-[486px]"><div className="w-fit"><Tag>无指标</Tag></div></div>
        <div className="h-[29px] -translate-x-px"><Tag caret={false}>区间统计</Tag></div>
        <div className="h-[29px] grow" />
      </div>
      <PriceChart wide={wide} q={q} />

      <Legend name="MACD" values={q.macd} last="text-[#3d85d8]" />
      <svg className="block h-[82px] w-[620px] shrink-0 overflow-visible" viewBox="0 786 620 82">
        <path d="M6 782V868M6 867H620" stroke="#20242b" fill="none" />
        <path d="M6 825H540" stroke="#1b1f26" strokeDasharray="2 2" />
        {q.macdAxis.map((t, i) => (
          <Label key={t} x={wide ? 595.500 : 588.500} y={[793.500, 826, 859][i]} w={t.length * 6.700 - (wide ? 1.500 : 0)} size={14.500} fill="#a4a7b3" end>{t}</Label>
        ))}
        <g transform={dataMatrix(wide, 0)}><Macd wide={wide} /></g>
      </svg>

      <Legend name="成交量" values={q.vol} />
      <svg className="block h-[82px] w-[620px] shrink-0 overflow-visible" viewBox="0 906 620 82">
        <path d="M6 903V988M6 987H620" stroke="#20242b" fill="none" />
        <path d="M6 945H540" stroke="#1b1f26" strokeDasharray="2 2" />
        {q.volAxis.map((t, i) => (
          <Label key={t} x={i === 2 ? 586 : 546.500} y={[916, 947, 978][i]} w={i === 2 ? undefined : 47} size={16} fill="#a4a7b3">{t}</Label>
        ))}
        <g transform={dataMatrix(wide, 0)}><Volume wide={wide} /></g>
      </svg>

      <Legend name="成交额" values={q.amount} />
      <svg className="-mt-[4px] block h-[70px] w-[620px] shrink-0 overflow-hidden" viewBox="0 1022 620 70">
        <path d="M6 1022V1092" stroke="#20242b" fill="none" />
        <path d="M6 1065H540" stroke="#1b1f26" strokeDasharray="2 2" />
        {q.amountAxis.map((t, i) => (
          <Label key={t} x={545} y={[1034, 1067][i]} w={49} size={16} fill="#a4a7b3">{t}</Label>
        ))}
        <g transform={dataMatrix(wide, 120)}><Volume wide={wide} /></g>
      </svg>

      <BottomTabs wide={wide} />
      <ActionBar wide={wide} />
      <SystemNav wide={wide} />
    </div>
  );
}

export default function App() {
  return (
    <div className="flex h-[1687px] w-[1280px] items-start bg-[#fefefe] font-[Roboto,'Noto_Sans_CJK_SC',sans-serif]">
      <div className="w-[632px] overflow-x-clip pt-[290px] pl-[45px]">
        <Phone q={quotes5} />
      </div>
      <div className="w-[616px] overflow-x-clip pt-[285px] pl-[23px]">
        <Phone wide q={quotes30} />
      </div>
    </div>
  );
}
